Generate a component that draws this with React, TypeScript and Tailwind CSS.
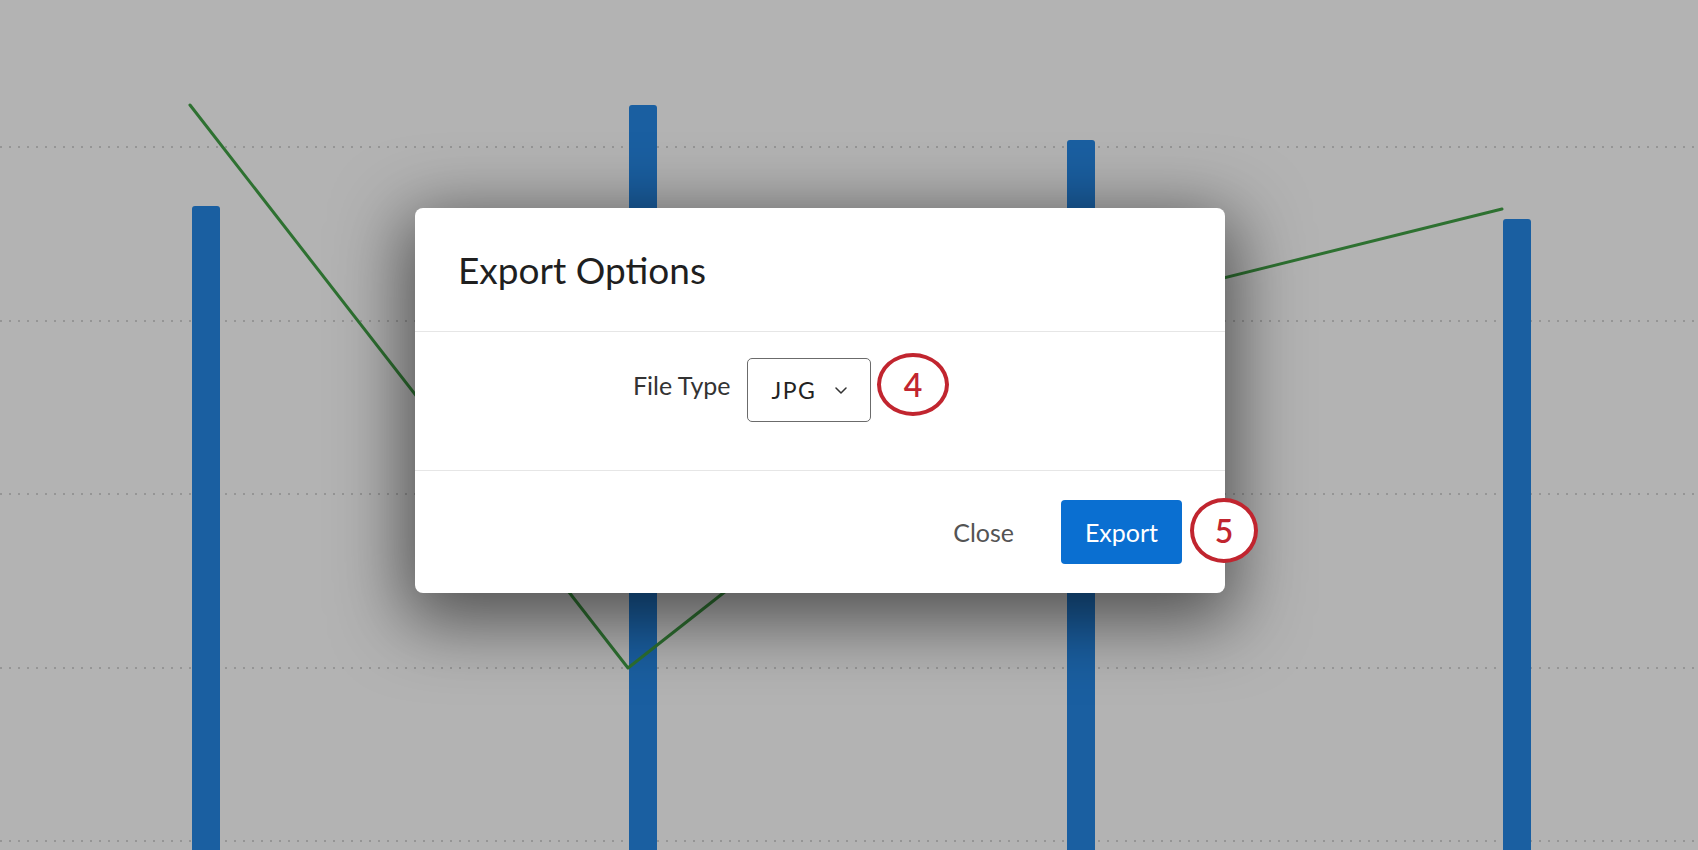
import React from 'react';

const bars = [
  { x: 192, top: 206 },
  { x: 629, top: 105 },
  { x: 1067, top: 140 },
  { x: 1503, top: 219 },
];

const gridLines = [147, 321, 494, 668, 841];

function ChartBackdrop() {
  return (
    <svg className="absolute inset-0" width="1698" height="850" viewBox="0 0 1698 850">
      {gridLines.map((y) => (
        <line key={y} x1="0" y1={y} x2="1698" y2={y} stroke="#959595" strokeWidth="2" strokeDasharray="2 7" />
      ))}
      {bars.map((b) => (
        <path
          key={b.x}
          d={`M${b.x} 850 V${b.top + 3} Q${b.x} ${b.top} ${b.x + 3} ${b.top} H${b.x + 25} Q${b.x + 28} ${b.top} ${b.x + 28} ${b.top + 3} V850 Z`}
          fill="#1a5fa1"
        />
      ))}
      <polyline
        points="190,105 628,668 1078,314 1502,209"
        fill="none"
        stroke="#2e7131"
        strokeWidth="3"
        strokeLinecap="round"
        strokeLinejoin="round"
      />
    </svg>
  );
}

function Callout({ n, className }: { n: number; className: string }) {
  return (
    <div
      className={`absolute flex items-center justify-center rounded-[50%] border-[4px] border-[#c1252f] bg-white text-[32px] font-semibold leading-none text-[#c1252f] ${className}`}
    >
      {n}
    </div>
  );
}

export default function App() {
  return (
    <div
      className="relative w-[1698px] h-[850px] overflow-hidden bg-[#b3b3b3]"
      style={{ fontFamily: 'Lato, "Open Sans", sans-serif' }}
    >
      <ChartBackdrop />

      {/* modal */}
      <div className="absolute left-[415px] top-[208px] w-[810px] h-[385px] flex flex-col rounded-[8px] bg-white shadow-[0_18px_70px_10px_rgba(0,0,0,0.55)]">
        <div className="h-[124px] flex items-center pl-[43px] border-b border-[#e6e6e6]">
          <h2 className="text-[37px] leading-none text-[#1f1f1f]">Export Options</h2>
        </div>

        <div className="h-[138px] flex items-start pt-[26px] pl-[218px] gap-[16px]">
          <span className="mt-[15px] text-[25px] leading-none text-[#333333]">File Type</span>
          <button className="w-[124px] h-[64px] flex items-center justify-between pl-[24px] pr-[23px] rounded-[5px] border border-[#6b6b6b] bg-white">
            <span className="text-[23px] leading-none tracking-[1.5px] text-[#222222]">JPG</span>
            <svg width="12" height="7" viewBox="0 0 12 7" fill="none">
              <path d="M1 1 6 6 11 1" stroke="#333333" strokeWidth="1.5" strokeLinecap="round" strokeLinejoin="round" />
            </svg>
          </button>
        </div>

        <div className="flex-1 flex items-center justify-end pr-[43px] border-t border-[#e6e6e6]">
          <button className="h-[64px] px-[20px] text-[25px] leading-none text-[#545454]">Close</button>
          <button className="ml-[27px] w-[121px] h-[64px] flex items-center justify-center rounded-[4px] bg-[#0a6fd1] text-[25px] leading-none text-white">
            Export
          </button>
        </div>
      </div>

      <Callout n={4} className="left-[877px] top-[353px] w-[72px] h-[63px]" />
      <Callout n={5} className="left-[1190px] top-[498px] w-[68px] h-[65px]" />
    </div>
  );
}
